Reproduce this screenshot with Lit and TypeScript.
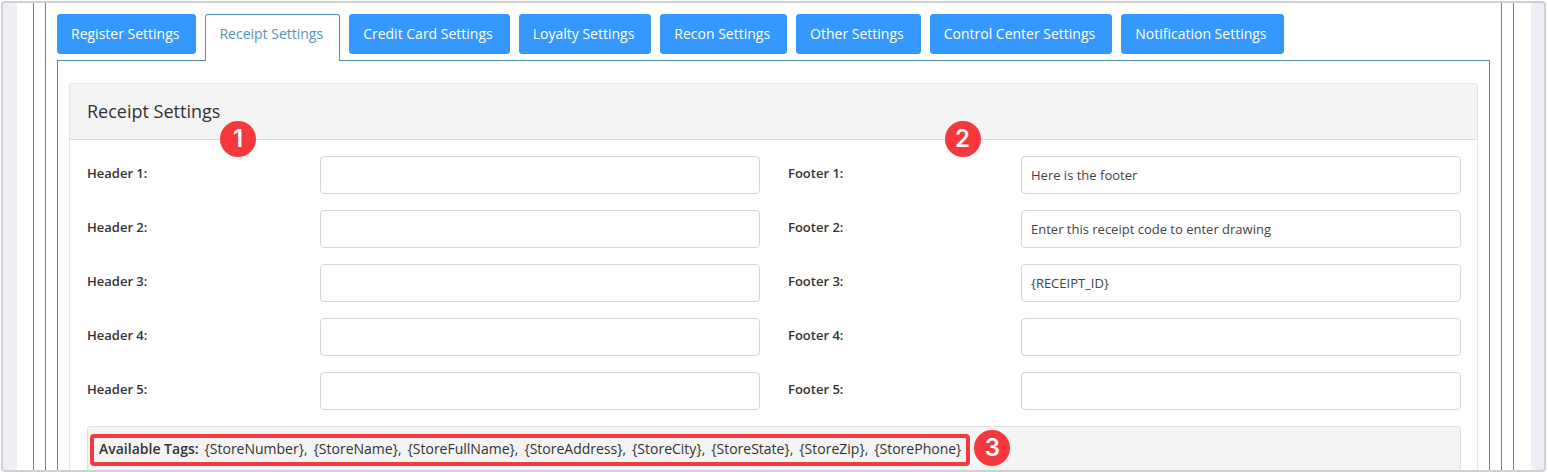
import { LitElement, html, css } from "lit";
import { customElement, property, state } from "lit/decorators.js";

@customElement("step-badge")
class StepBadge extends LitElement {
  @property() label = "";

  static styles = css`
    :host {
      display: flex;
      align-items: center;
      justify-content: center;
      width: 36px;
      height: 36px;
      border-radius: 50%;
      background: #f5383b;
      color: #fff;
      font: 600 24px/36px Inter, "Liberation Sans", sans-serif;
    }
  `;

  render() {
    return html`<span>${this.label}</span>`;
  }
}

interface Field {
  id: string;
  label: string;
  value: string;
}

const TABS = [
  "Register Settings",
  "Receipt Settings",
  "Credit Card Settings",
  "Loyalty Settings",
  "Recon Settings",
  "Other Settings",
  "Control Center Settings",
  "Notification Settings",
];

const makeFields = (name: string, values: string[]): Field[] =>
  values.map((value, i) => ({
    id: `${name.toLowerCase()}-${i + 1}`,
    label: `${name} ${i + 1}:`,
    value,
  }));

const HEADERS = makeFields("Header", ["", "", "", "", ""]);
const FOOTERS = makeFields("Footer", [
  "Here is the footer",
  "Enter this receipt code to enter drawing",
  "{RECEIPT_ID}",
  "",
  "",
]);

const TAGS = [
  "StoreNumber",
  "StoreName",
  "StoreFullName",
  "StoreAddress",
  "StoreCity",
  "StoreState",
  "StoreZip",
  "StorePhone",
];

@customElement("app-root")
class AppRoot extends LitElement {
  @state() private active = "Receipt Settings";

  static styles = css`
    :host {
      display: block;
      box-sizing: border-box;
      min-height: 100vh;
      padding: 1px 2px 0 1px;
      background: #fff;
      color: #333;
      font: 14px/20px "Open Sans", sans-serif;
    }
    * {
      box-sizing: border-box;
    }
    .frame {
      border: 2px solid #d0d0d3;
      border-radius: 4px;
      background: #eeeff6;
      padding: 0 13px 0 14px;
    }
    .page {
      background: #fff;
      padding: 0 17px 0 16px;
    }
    .outer,
    .inner {
      border: solid #4f909f;
      border-width: 0 1px;
      padding: 0 11px;
    }
    .inner {
      padding-top: 11px;
    }
    .tabs {
      display: flex;
      gap: 9px;
      height: 47px;
      margin-bottom: -1px;
      position: relative;
    }
    .tab {
      height: 40px;
      padding: 0 16px 0 13px;
      border: 1px solid #3598fe;
      border-radius: 3px;
      background: #3598fe;
      color: #fff;
      font: inherit;
      white-space: nowrap;
      cursor: pointer;
    }
    .tab.active {
      height: 47px;
      padding-bottom: 8px;
      border-color: #5590b0;
      border-bottom: 0;
      border-radius: 3px 3px 0 0;
      background: #fff;
      color: #5595b8;
    }
    .pane {
      border: solid #4f909f;
      border-width: 1px 1px 0;
      padding: 22px 11px 0;
    }
    .panel {
      border: solid #e4e4e4;
      border-width: 1px 1px 0;
      border-radius: 3px 3px 0 0;
    }
    .panel-head {
      display: grid;
      grid-template-columns: 1fr 1fr;
      align-items: center;
      height: 56px;
      padding: 0 17px 2px;
      border-bottom: 1px solid #dcdcdc;
      background: #f4f4f4;
      position: relative;
    }
    h2 {
      margin: 0;
      font-size: 18px;
      line-height: 24px;
      font-weight: 400;
    }
    .mark {
      position: absolute;
      top: 37px;
    }
    .mark-header {
      left: 150px;
    }
    .mark-footer {
      left: calc(50% + 171px);
    }
    .panel-body {
      padding: 16px 16px 0 17px;
    }
    .columns {
      display: grid;
      grid-template-columns: 1fr 1fr;
      gap: 28px;
    }
    .column {
      display: grid;
      gap: 16px;
    }
    .field {
      display: grid;
      grid-template-columns: 233fr 440fr;
    }
    label {
      padding-top: 7px;
      font-size: 13px;
      line-height: 20px;
      font-weight: 600;
    }
    input {
      width: 100%;
      min-width: 0;
      height: 38px;
      padding: 0 9px;
      border: 1px solid #d6d6d8;
      border-radius: 4px;
      background: #fff;
      color: #444;
      font: 13px/20px "Open Sans", sans-serif;
    }
    .well {
      display: flex;
      align-items: flex-end;
      gap: 4px;
      margin-top: 16px;
      padding: 3px 2px 4px;
      border: solid #e0e0e0;
      border-width: 1px 1px 0;
      border-radius: 4px 4px 0 0;
      background: #f4f4f4;
    }
    .tags {
      display: flex;
      gap: 6px;
      margin: 0;
      padding: 1px 5px 3px;
      border: 4px solid #f03c40;
      border-radius: 4px;
    }
    b {
      font-weight: 600;
    }
  `;

  private renderTab(name: string) {
    const on = name === this.active;
    return html`<button
      class="tab ${on ? "active" : ""}"
      role="tab"
      aria-selected=${on}
      @click=${() => (this.active = name)}
    >${name}</button>`;
  }

  private renderField(f: Field) {
    return html`<div class="field">
      <label for=${f.id}>${f.label}</label>
      <input id=${f.id} type="text" .value=${f.value} />
    </div>`;
  }

  render() {
    const last = TAGS.length - 1;
    return html`
      <div class="frame">
        <main class="page">
          <div class="outer">
            <div class="inner">
              <nav class="tabs" role="tablist">${TABS.map((t) => this.renderTab(t))}</nav>
              <div class="pane">
                <section class="panel">
                  <header class="panel-head">
                    <h2>Receipt Settings</h2>
                    <step-badge class="mark mark-header" label="1"></step-badge>
                    <step-badge class="mark mark-footer" label="2"></step-badge>
                  </header>
                  <div class="panel-body">
                    <div class="columns">
                      <div class="column">${HEADERS.map((f) => this.renderField(f))}</div>
                      <div class="column">${FOOTERS.map((f) => this.renderField(f))}</div>
                    </div>
                    <div class="well">
                      <p class="tags">
                        <b>Available Tags:</b>
                        ${TAGS.map((t, i) => html`<span>{${t}}${i < last ? "," : ""}</span>`)}
                      </p>
                      <step-badge label="3"></step-badge>
                    </div>
                  </div>
                </section>
              </div>
            </div>
          </div>
        </main>
      </div>
    `;
  }
}
